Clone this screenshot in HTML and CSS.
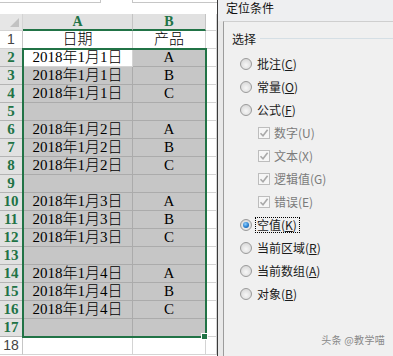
FILE: index.html
```html
<!DOCTYPE html>
<html>
<head>
<meta charset="utf-8">
<title>定位条件</title>
<link rel="stylesheet" href="styles.css">
</head>
<body>
<div class="screen">

  <div class="sheet">
    <div class="toolbar"><div class="namebox"></div><div class="fxbox"></div></div>

    <div class="row head">
      <div class="corner"><span class="tri"></span></div>
      <div class="ch a on">A</div>
      <div class="ch b on">B</div>
      <div class="ch x"></div>
    </div>

    <div class="row">
      <div class="rh">1</div>
      <div class="c a">日期</div>
      <div class="c b">产品</div>
      <div class="c x"></div>
    </div>
    <div class="row">
      <div class="rh on">2</div>
      <div class="c a">2018年1月1日</div>
      <div class="c b g">A</div>
      <div class="c x"></div>
    </div>
    <div class="row">
      <div class="rh on">3</div>
      <div class="c a g">2018年1月1日</div>
      <div class="c b g">B</div>
      <div class="c x"></div>
    </div>
    <div class="row">
      <div class="rh on">4</div>
      <div class="c a g">2018年1月1日</div>
      <div class="c b g">C</div>
      <div class="c x"></div>
    </div>
    <div class="row">
      <div class="rh on">5</div>
      <div class="c a g"></div>
      <div class="c b g"></div>
      <div class="c x"></div>
    </div>
    <div class="row">
      <div class="rh on">6</div>
      <div class="c a g">2018年1月2日</div>
      <div class="c b g">A</div>
      <div class="c x"></div>
    </div>
    <div class="row">
      <div class="rh on">7</div>
      <div class="c a g">2018年1月2日</div>
      <div class="c b g">B</div>
      <div class="c x"></div>
    </div>
    <div class="row">
      <div class="rh on">8</div>
      <div class="c a g">2018年1月2日</div>
      <div class="c b g">C</div>
      <div class="c x"></div>
    </div>
    <div class="row">
      <div class="rh on">9</div>
      <div class="c a g"></div>
      <div class="c b g"></div>
      <div class="c x"></div>
    </div>
    <div class="row">
      <div class="rh on">10</div>
      <div class="c a g">2018年1月3日</div>
      <div class="c b g">A</div>
      <div class="c x"></div>
    </div>
    <div class="row">
      <div class="rh on">11</div>
      <div class="c a g">2018年1月3日</div>
      <div class="c b g">B</div>
      <div class="c x"></div>
    </div>
    <div class="row">
      <div class="rh on">12</div>
      <div class="c a g">2018年1月3日</div>
      <div class="c b g">C</div>
      <div class="c x"></div>
    </div>
    <div class="row">
      <div class="rh on">13</div>
      <div class="c a g"></div>
      <div class="c b g"></div>
      <div class="c x"></div>
    </div>
    <div class="row">
      <div class="rh on">14</div>
      <div class="c a g">2018年1月4日</div>
      <div class="c b g">A</div>
      <div class="c x"></div>
    </div>
    <div class="row">
      <div class="rh on">15</div>
      <div class="c a g">2018年1月4日</div>
      <div class="c b g">B</div>
      <div class="c x"></div>
    </div>
    <div class="row">
      <div class="rh on">16</div>
      <div class="c a g">2018年1月4日</div>
      <div class="c b g">C</div>
      <div class="c x"></div>
    </div>
    <div class="row">
      <div class="rh on">17</div>
      <div class="c a g"></div>
      <div class="c b g"></div>
      <div class="c x"></div>
    </div>
    <div class="row">
      <div class="rh">18</div>
      <div class="c a"></div>
      <div class="c b"></div>
      <div class="c x"></div>
    </div>

    <!-- selection outline + fill handle -->
    <div class="selection"></div>
    <div class="handle"></div>
  </div>

  <div class="dialog">
    <div class="title">定位条件</div>
    <div class="client">
      <div class="legend"><span>选择</span><i class="rule"></i></div>
      <ul class="opts">
        <li class="opt"><span class="radio"></span><span>批注(<u>C</u>)</span></li>
        <li class="opt"><span class="radio"></span><span>常量(<u>O</u>)</span></li>
        <li class="opt"><span class="radio"></span><span>公式(<u>F</u>)</span></li>
        <li class="opt sub"><span class="check"><svg width="10" height="10" viewBox="0 0 10 10"><path d="M1.5 5.2 L4 7.8 L8.6 1.8" fill="none" stroke="#a9a9a9" stroke-width="1.6"/></svg></span><span>数字(U)</span></li>
        <li class="opt sub"><span class="check"><svg width="10" height="10" viewBox="0 0 10 10"><path d="M1.5 5.2 L4 7.8 L8.6 1.8" fill="none" stroke="#a9a9a9" stroke-width="1.6"/></svg></span><span>文本(X)</span></li>
        <li class="opt sub"><span class="check"><svg width="10" height="10" viewBox="0 0 10 10"><path d="M1.5 5.2 L4 7.8 L8.6 1.8" fill="none" stroke="#a9a9a9" stroke-width="1.6"/></svg></span><span>逻辑值(G)</span></li>
        <li class="opt sub"><span class="check"><svg width="10" height="10" viewBox="0 0 10 10"><path d="M1.5 5.2 L4 7.8 L8.6 1.8" fill="none" stroke="#a9a9a9" stroke-width="1.6"/></svg></span><span>错误(E)</span></li>
        <li class="opt"><span class="radio on"></span><span class="focus">空值(<u>K</u>)</span></li>
        <li class="opt"><span class="radio"></span><span>当前区域(<u>R</u>)</span></li>
        <li class="opt"><span class="radio"></span><span>当前数组(<u>A</u>)</span></li>
        <li class="opt"><span class="radio"></span><span>对象(<u>B</u>)</span></li>
      </ul>
      <div class="mark">头条 @教学喵</div>
    </div>
  </div>

</div>
</body>
</html>
```

FILE: styles.css
```css
body {
   margin: 0;
   background-color: white;
   font-family: "Noto Sans CJK SC", sans-serif;
}

.screen {
   display: flex;
   width: 393px;
   height: 356px;
   overflow: hidden;
}

/* ---------- spreadsheet ---------- */

.sheet {
   position: relative;
   width: 217px;
   flex: none;
   background: white;
}

.toolbar {
   display: flex;
   gap: 31px;
   height: 14px;
}

.namebox {
   width: 100px;
   height: 2px;
   border-right: 1px solid #c6c6c6;
   border-bottom: 1px solid #c6c6c6;
}

.fxbox {
   flex: 1;
   height: 2px;
   border-left: 1px solid #c6c6c6;
   border-bottom: 1px solid #c6c6c6;
}

.row {
   display: flex;
   height: 18px;
}

.row.head {
   height: 17px;
}

.row > div {
   box-sizing: border-box;
   height: 100%;
   border-right: 1px solid #d4d4d4;
   border-bottom: 1px solid #d4d4d4;
}

.corner {
   position: relative;
   width: 23px;
   background: #e6e6e6;
}

.corner .tri {
   position: absolute;
   right: 3px;
   bottom: 3px;
   width: 0;
   height: 0;
   border-left: 9px solid transparent;
   border-bottom: 9px solid #c2c2c2;
}

.ch {
   font-family: "Liberation Serif", serif;
   font-size: 14px;
   font-weight: bold;
   text-align: center;
   line-height: 16px;
   color: #217346;
}

.ch.on {
   background: #e1e1e1;
   border-right-color: #c4c4c4 !important;
   border-bottom: 2px solid #217346 !important;
   line-height: 15px;
}

.a { width: 110px; flex: none; }
.b { width: 73px; flex: none; }
.x { flex: 1; }

.rh {
   width: 23px;
   flex: none;
   font-family: "Liberation Sans", sans-serif;
   font-size: 14px;
   line-height: 17px;
   text-align: center;
   color: #444;
   border-right-color: #c6c6c6 !important;
}

.rh.on {
   background: #e1e1e1;
   color: #217346;
   font-family: "Liberation Serif", serif;
   font-weight: bold;
   font-size: 15px;
   border-bottom-color: #b4b4b4 !important;
}

.c {
   font-family: "Liberation Serif", "Noto Sans CJK SC", serif;
   font-size: 15px;
   font-weight: 300;
   line-height: 17px;
   text-align: center;
   color: #000;
   white-space: nowrap;
}

.c.g {
   background: #c6c6c6;
   border-right-color: #ababab !important;
   border-bottom-color: #ababab !important;
}

.selection {
   position: absolute;
   left: 22px;
   top: 48px;
   width: 181px;
   height: 286px;
   border: 2px solid #217346;
}

.handle {
   position: absolute;
   left: 201px;
   top: 333px;
   width: 5px;
   height: 5px;
   background: #217346;
   border: 1px solid white;
}

/* ---------- dialog ---------- */

.dialog {
   flex: 1;
   display: flex;
   flex-direction: column;
   background: #e9e9e9;
   border-left: 1px solid #3a3a3a;
}

.title {
   height: 21px;
   padding-left: 8px;
   font-size: 12px;
   line-height: 16px;
   color: #111;
   background: #eeeff1;
}

.client {
   position: relative;
   flex: 1;
   margin-left: 5px;
   background: #f0f0f0;
   border-top: 1px solid #cfcfcf;
   border-left: 1px solid #9c9c9c;
}

.legend {
   display: flex;
   align-items: center;
   gap: 4px;
   margin-top: 8px;
   padding-left: 8px;
   height: 16px;
   font-size: 12px;
   color: #1a1a1a;
}

.legend .rule {
   flex: 1;
   height: 1px;
   background: #d5dfe5;
}

.opts {
   list-style: none;
   margin: 6px 0 0 0;
   padding: 0 0 0 16px;
}

.opt {
   display: flex;
   align-items: center;
   height: 23px;
   font-size: 12px;
   color: #1a1a1a;
}

.opt u {
   text-decoration-thickness: 1px;
   text-underline-offset: 1px;
}

.radio {
   box-sizing: border-box;
   width: 12px;
   height: 12px;
   margin-right: 5px;
   border-radius: 50%;
   border: 1px solid #9a9a9a;
   background: radial-gradient(circle at 50% 60%, #f7f7f7 0%, #e2e2e2 55%, #cfcfcf 100%);
   display: flex;
   align-items: center;
   justify-content: center;
}

.radio.on::after {
   content: "";
   width: 6px;
   height: 6px;
   border-radius: 50%;
   background: radial-gradient(circle at 40% 35%, #8fd0ff 0%, #2a7fcf 55%, #0b4f96 100%);
}

.opt.sub {
   padding-left: 18px;
   color: #7b7b7b;
}

.check {
   box-sizing: border-box;
   width: 12px;
   height: 12px;
   margin-right: 4px;
   border: 1px solid #bdbdbd;
   background: #f6f6f6;
   display: flex;
   align-items: center;
   justify-content: center;
}

.focus {
   margin-left: -1px;
   padding: 0 2px 0 1px;
   line-height: 14px;
   outline: 1px dotted #000;
}

.mark {
   position: absolute;
   right: 8px;
   bottom: 9px;
   font-size: 10px;
   color: #8a8a8a;
   letter-spacing: 0.3px;
}
```
